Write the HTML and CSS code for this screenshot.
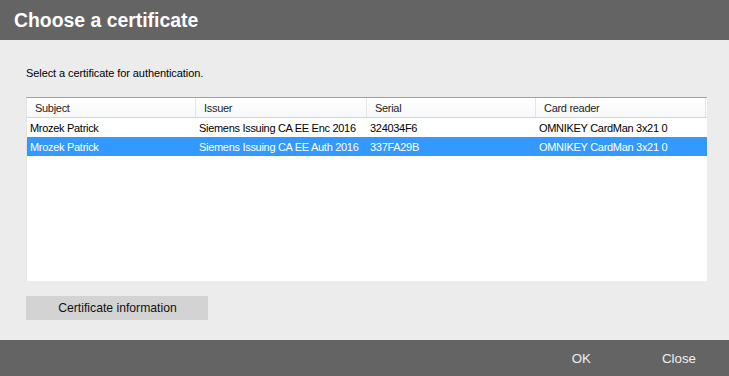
FILE: index.html
```html
<!DOCTYPE html>
<html>
<head>
<meta charset="utf-8">
<link rel="stylesheet" href="styles.css">
</head>
<body>
<div class="dialog">
  <div class="titlebar">Choose a certificate</div>
  <div class="content">
    <div class="prompt">Select a certificate for authentication.</div>
    <div class="list">
      <div class="row head">
        <div class="cell">Subject</div>
        <div class="cell">Issuer</div>
        <div class="cell">Serial</div>
        <div class="cell">Card reader</div>
      </div>
      <div class="row">
        <div class="cell">Mrozek Patrick</div>
        <div class="cell">Siemens Issuing CA EE Enc 2016</div>
        <div class="cell">324034F6</div>
        <div class="cell">OMNIKEY CardMan 3x21 0</div>
      </div>
      <div class="row selected">
        <div class="cell">Mrozek Patrick</div>
        <div class="cell">Siemens Issuing CA EE Auth 2016</div>
        <div class="cell">337FA29B</div>
        <div class="cell">OMNIKEY CardMan 3x21 0</div>
      </div>
    </div>
    <div class="btnrow"><button class="infobtn">Certificate information</button></div>
  </div>
  <div class="footer">
    <button class="fbtn ok">OK</button>
    <button class="fbtn close">Close</button>
  </div>
</div>
</body>
</html>
```
FILE: styles.css
```css
* { box-sizing: border-box; }
html, body { margin: 0; padding: 0; }
body {
  width: 729px;
  height: 376px;
  overflow: hidden;
  background: #ececec;
  font-family: "Liberation Sans", Arial, sans-serif;
}
.dialog {
  display: flex;
  flex-direction: column;
  height: 376px;
}
.titlebar {
  height: 40px;
  background: #646464;
  color: #ffffff;
  font-weight: bold;
  font-size: 19.4px;
  padding: 9px 0 0 14px;
}
.content {
  flex: 1;
  background: #ececec;
  padding: 27px 0 0 26px;
}
.prompt {
  font-size: 11px;
  letter-spacing: -0.08px;
  color: #000;
  height: 30px;
}
.list {
  width: 681px;
  height: 184px;
  background: #fff;
  border-top: 1px solid #a0a0a0;
  border-left: 1px solid #e3e3e3;
  font-size: 11px;
  letter-spacing: -0.3px;
}
.row {
  display: grid;
  grid-template-columns: 169px 171px 169px 170px;
  height: 19px;
  align-items: center;
  color: #000;
}
.row .cell {
  padding-left: 3px;
  white-space: nowrap;
  overflow: hidden;
}
.row.head {
  height: 20px;
  background: linear-gradient(#ffffff, #f7f8fa);
  border-bottom: 1px solid #d5d5d5;
  color: #1e1e1e;
}
.row.head .cell {
  padding-left: 8px;
  border-right: 1px solid #e5e5e5;
  height: 100%;
  display: flex;
  align-items: center;
}
.row.selected {
  background: #3399ff;
  color: #ffffff;
}
.btnrow {
  padding-top: 15px;
}
.infobtn {
  width: 182px;
  height: 24px;
  background: #d3d3d3;
  border: none;
  font-family: "Liberation Sans", Arial, sans-serif;
  font-size: 12.2px;
  color: #111;
  padding: 0 0 0 1px;
}
.footer {
  height: 36px;
  background: #646464;
  display: flex;
  justify-content: flex-end;
  align-items: center;
  padding-right: 33px;
}
.fbtn {
  background: none;
  border: none;
  color: #f0f0f0;
  font-family: "Liberation Sans", Arial, sans-serif;
  font-size: 13.3px;
  padding: 0;
}
.fbtn.ok { margin-right: 71px; }
```
